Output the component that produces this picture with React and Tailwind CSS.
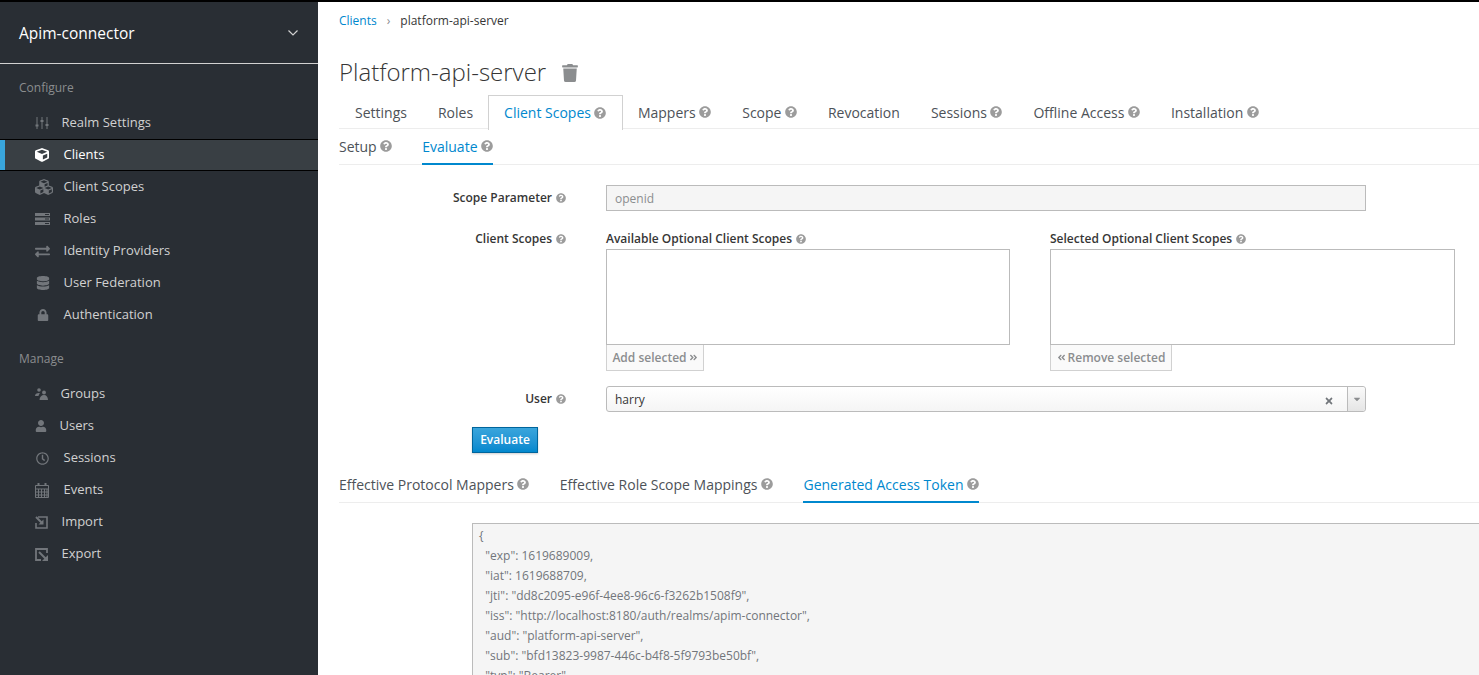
import React from "react";
import { FaQuestionCircle, FaTrash, FaCube, FaCubes, FaExchangeAlt, FaDatabase, FaLock, FaUser, FaRegClock, FaTimes, FaCaretDown, FaAngleDoubleLeft, FaAngleDoubleRight } from "react-icons/fa";

const Sliders = () => (
  <svg viewBox="0 0 14 14" className="w-[14px] h-[14px]" fill="none" stroke="currentColor">
    <path d="M2 1v12M7 1v12M12 1v12" strokeWidth="1" />
    <path d="M2 8.500v2M7 4v2M12 8v2" strokeWidth="3" />
  </svg>
);
const Server = () => (
  <svg viewBox="0 0 15 12" className="w-[15px] h-[12px]" fill="currentColor">
    <path d="M0 0h15v3H0zM0 4.500h15v3H0zM0 9h15v3H0z" />
    <path d="M10 1h4v1h-4zM10 5.500h4v1h-4zM10 10h4v1h-4z" fill="#292e34" />
  </svg>
);
const Groups = () => (
  <svg viewBox="0 0 13 12" className="w-[13px] h-[12px]" fill="currentColor">
    <circle cx="4" cy="2" r="1.800" />
    <circle cx="9" cy="4.500" r="1.900" />
    <path d="M0 8c0-2 1.500-3 4-3l1 .6C4 6.500 3.800 7 3.500 8zM4.500 12c0-3 2-5 4.500-5s4 2 4 5z" />
  </svg>
);
const Calendar = () => (
  <svg viewBox="0 0 14 15" className="w-[14px] h-[15px]" fill="none" stroke="currentColor">
    <path d="M.5 2.500h13v12H.5zM.5 6h13M.5 9h13M.5 12h13M3.500 6v8M6.500 6v8M9.500 6v8M12 6v8" strokeWidth="1" />
    <path d="M3.500 0v3M10.500 0v3" strokeWidth="2" />
  </svg>
);
const ImportIcon = () => (
  <svg viewBox="0 0 13 13" className="w-[13px] h-[13px]" fill="none" stroke="currentColor">
    <path d="M3 1h9v11H1V7" strokeWidth="1.600" />
    <path d="M1 1l6.500 6.500" strokeWidth="2" />
    <path d="M3.500 8.500h5v-5z" fill="currentColor" stroke="none" />
  </svg>
);
const ExportIcon = () => (
  <svg viewBox="0 0 13 13" className="w-[13px] h-[13px]" fill="none" stroke="currentColor">
    <path d="M6 12H1V1h11v4" strokeWidth="1.800" />
    <path d="M4 4l7 7" strokeWidth="2" />
    <path d="M13 7v6H7z" fill="currentColor" stroke="none" />
  </svg>
);
const Chevron = () => (
  <svg viewBox="0 0 10 6" className="w-[10px] h-[6px]" fill="none" stroke="#d1d1d1" strokeWidth="1.200">
    <path d="M.5 .5L5 5l4.500-4.500" />
  </svg>
);

const configure = [
  { label: "Realm Settings", icon: <Sliders />, w: "w-[26.500px]" },
  { label: "Clients", icon: <FaCube className="text-[14px]" />, w: "w-[28.500px]", active: true },
  { label: "Client Scopes", icon: <FaCubes className="text-[18px]" />, w: "w-[28.500px]" },
  { label: "Roles", icon: <Server />, w: "w-[28.500px]" },
  { label: "Identity Providers", icon: <FaExchangeAlt className="text-[15px]" />, w: "w-[28.500px]" },
  { label: "User Federation", icon: <FaDatabase className="text-[14px] ml-[1px]" />, w: "w-[28.500px]" },
  { label: "Authentication", icon: <FaLock className="text-[12px] ml-[2px]" />, w: "w-[28.500px]" },
];
const manage = [
  { label: "Groups", icon: <Groups />, w: "w-[25.500px]" },
  { label: "Users", icon: <FaUser className="text-[12px]" />, w: "w-[24.500px]" },
  { label: "Sessions", icon: <FaRegClock className="text-[13px] ml-[1px]" />, w: "w-[28.500px]" },
  { label: "Events", icon: <Calendar />, w: "w-[28.500px]" },
  { label: "Import", icon: <ImportIcon />, w: "w-[26.500px]" },
  { label: "Export", icon: <ExportIcon />, w: "w-[26.500px]" },
];

function NavItem({ item }) {
  return (
    <div
      className={
        item.active
          ? "h-[32px] flex items-center pl-[35px] text-[13px] border-y border-black bg-[#393f44] text-white relative"
          : "h-[32px] flex items-center pl-[35px] text-[13px] text-[#d1d1d1]"
      }
    >
      {item.active && <span className="absolute left-0 top-0 bottom-0 w-[5px] bg-[#39a5dc]" />}
      <span className={`${item.w} shrink-0 flex items-center ${item.active ? "text-white" : "text-[#72767b]"}`}>{item.icon}</span>
      <span>{item.label}</span>
    </div>
  );
}

const Help = () => <FaQuestionCircle className="inline-block ml-[3.500px] text-[12px] text-[#9c9c9c]" />;
const SmallHelp = () => <FaQuestionCircle className="inline-block align-[-1px] ml-[4px] text-[10px] text-[#9c9c9c]" />;

const mainTabs = [
  { label: "Settings" },
  { label: "Roles" },
  { label: "Client Scopes", help: true, active: true },
  { label: "Mappers", help: true },
  { label: "Scope", help: true },
  { label: "Revocation" },
  { label: "Sessions", help: true },
  { label: "Offline Access", help: true },
  { label: "Installation", help: true },
];

const token = [
  "{",
  '  "exp": 1619689009,',
  '  "iat": 1619688709,',
  '  "jti": "dd8c2095-e96f-4ee8-96c6-f3262b1508f9",',
  '  "iss": "http://localhost:8180/auth/realms/apim-connector",',
  '  "aud": "platform-api-server",',
  '  "sub": "bfd13823-9987-446c-b4f8-5f9793be50bf",',
  '  "typ": "Bearer",',
];

function tabClass(t, idx) {
  if (t.active) return "h-[35px] pl-[15px] pr-[15.500px] pb-[1px] border border-b-0 border-[#d1d1d1] bg-white text-[#0088ce] flex items-center";
  if (idx === 0) return "h-[34px] pl-[16px] pr-[16px] flex items-center";
  if (idx === 1) return "h-[34px] pl-[15px] pr-[15px] flex items-center";
  return "h-[34px] pl-[15px] pr-[16px] flex items-center";
}

export default function App() {
  return (
    <div className="w-[1479px] h-[675px] overflow-hidden flex flex-col bg-white font-['Open_Sans',sans-serif]">
      <div className="h-[2px] bg-black shrink-0" />
      <div className="flex flex-1 min-h-0">
        <aside className="w-[318px] shrink-0 bg-[#292e34]">
          <div className="h-[62px] flex items-center justify-between pl-[19px] pr-[20px] border-b border-[#d1d1d1] text-white">
            <span className="text-[15.500px] leading-none pt-[3px]">Apim-connector</span>
            <Chevron />
          </div>
          <div className="pl-[19px] h-[43px] pt-[15px] text-[12px] leading-[18px] text-[#8b8d8f]">Configure</div>
          {configure.map((i) => <NavItem key={i.label} item={i} />)}
          <div className="pl-[19px] h-[47px] pt-[19px] text-[12px] leading-[18px] text-[#8b8d8f]">Manage</div>
          {manage.map((i) => <NavItem key={i.label} item={i} />)}
        </aside>

        <main className="flex-1 min-w-0 pl-[21px] text-[#363636]">
          <div className="h-[36px] pt-[10px] flex items-start text-[12px] leading-[18px]">
            <span className="text-[#0088ce]">Clients</span>
            <span className="mx-[10px] text-[#8b8d8f] text-[12px]">›</span>
            <span>platform-api-server</span>
          </div>
          <div className="h-[57px] pt-[16px] flex items-start">
            <h1 className="text-[24px] leading-[36px] font-light text-[#363636]">Platform-api-server</h1>
            <FaTrash className="text-[18px] text-[#8b8d8f] ml-[15px] mt-[10px]" />
          </div>
          <div className="flex h-[34px] border-b border-[#ededed] text-[14px] text-[#4d5258]">
            {mainTabs.map((t, idx) => (
              <div key={t.label} className={tabClass(t, idx)}>
                {t.label}
                {t.help && <Help />}
              </div>
            ))}
          </div>
          <div className="flex h-[36px] border-b border-[#ededed] text-[14px] text-[#4d5258] gap-[30px]">
            <div className="h-[36px] pb-[2px] flex items-center">Setup<Help /></div>
            <div className="h-[36px] flex items-center text-[#0088ce] border-b-2 border-[#0088ce]">Evaluate<Help /></div>
          </div>

          <div className="pt-[20px] text-[12px]">
            <div className="flex items-start h-[41px]">
              <label className="w-[227px] h-[26px] flex items-center justify-end font-semibold">Scope Parameter<SmallHelp /></label>
              <div className="ml-[40px] w-[760px] h-[26px] border border-[#bbb] bg-[#f5f5f5] px-[8px] pt-[1px] flex items-center text-[#8b8d8f]">openid</div>
            </div>
            <div className="flex items-start h-[160px]">
              <label className="w-[227px] h-[26px] flex items-center justify-end font-semibold">Client Scopes<SmallHelp /></label>
              <div className="ml-[40px] w-[404px]">
                <div className="h-[23px] pt-[3px] font-semibold leading-[20px]">Available Optional Client Scopes<SmallHelp /></div>
                <div className="h-[96px] border border-[#bbb] bg-white" />
                <div className="h-[26px] w-[98px] border border-[#d1d1d1] border-t-0 bg-[#fafafa] text-[#8b8d8f] font-semibold flex items-center justify-center">Add selected<FaAngleDoubleRight className="text-[9px] ml-[2px]" /></div>
              </div>
              <div className="ml-[40px] w-[405px]">
                <div className="h-[23px] pt-[3px] font-semibold leading-[20px]">Selected Optional Client Scopes<SmallHelp /></div>
                <div className="h-[96px] border border-[#bbb] bg-white" />
                <div className="h-[26px] w-[122px] border border-[#d1d1d1] border-t-0 bg-[#fafafa] text-[#8b8d8f] font-semibold flex items-center justify-center"><FaAngleDoubleLeft className="text-[9px] mr-[2px]" />Remove selected</div>
              </div>
            </div>
            <div className="flex items-start h-[41px]">
              <label className="w-[227px] h-[26px] flex items-center justify-end font-semibold">User<SmallHelp /></label>
              <div className="ml-[40px] w-[760px] h-[26px] border border-[#bbb] rounded-[3px] bg-gradient-to-b from-white to-[#f5f5f5] flex items-center">
                <span className="pl-[8px] pt-[1px] flex-1">harry</span>
                <FaTimes className="text-[10px] text-[#72767b] mr-[13px] mt-[4px]" />
                <span className="w-[18px] h-full border-l border-[#bbb] bg-gradient-to-b from-[#fafafa] to-[#e5e5e5] flex items-center justify-center rounded-r-[3px]">
                  <FaCaretDown className="text-[10px] text-[#8b8d8f]" />
                </span>
              </div>
            </div>
            <div className="pl-[133px]">
              <button className="w-[66px] h-[26px] border border-[#00659c] bg-gradient-to-b from-[#39a5dc] to-[#0088ce] text-white font-semibold text-[12px] shadow-[0_1px_2px_rgba(0,0,0,0.2)] flex items-center justify-center">Evaluate</button>
            </div>
          </div>

          <div className="flex h-[36px] mt-[14px] border-b border-[#ededed] text-[14px] text-[#4d5258] gap-[30.500px]">
            <div className="h-[36px] pb-[2px] flex items-center">Effective Protocol Mappers<Help /></div>
            <div className="h-[36px] pb-[2px] flex items-center">Effective Role Scope Mappings<Help /></div>
            <div className="h-[36px] flex items-center text-[#0088ce] border-b-2 border-[#0088ce]">Generated Access Token<Help /></div>
          </div>
          <div className="pl-[133px] pt-[20px]">
            <pre className="w-[1100px] h-[300px] border border-[#bbb] bg-[#f5f5f5] px-[6px] pt-[2px] text-[12px] leading-[20px] text-[#72767b] font-['Open_Sans',sans-serif]">{token.join("\n")}</pre>
          </div>
        </main>
      </div>
    </div>
  );
}
